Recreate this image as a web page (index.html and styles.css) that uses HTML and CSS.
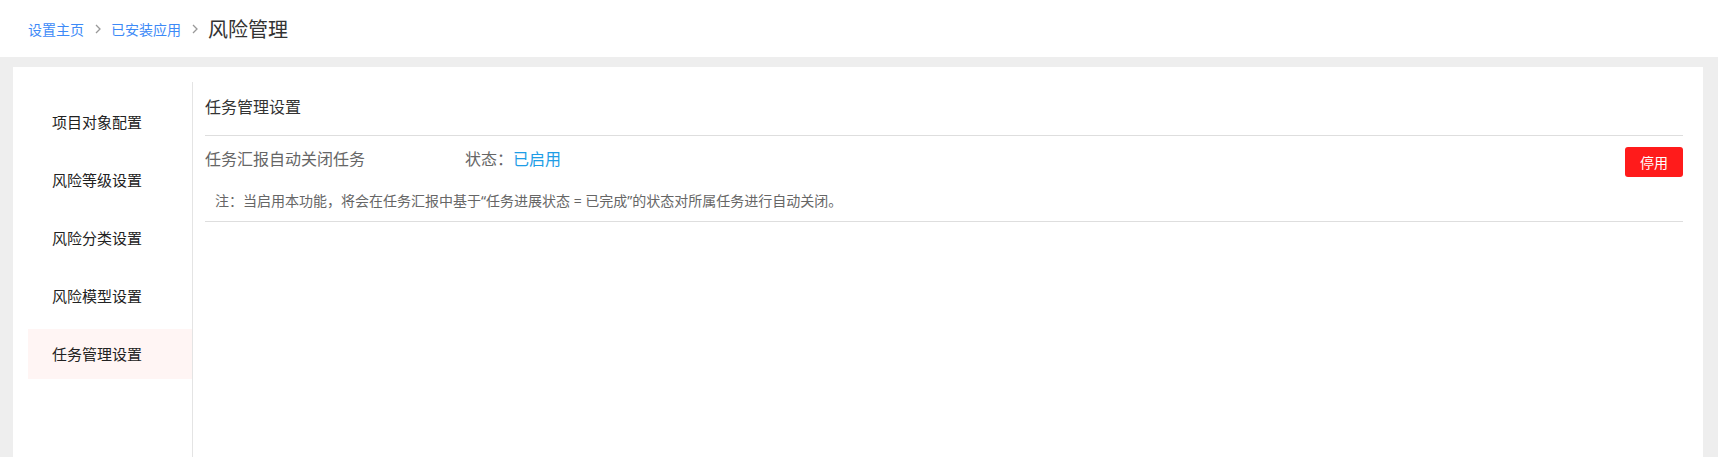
FILE: index.html
```html
<!DOCTYPE html>
<html lang="zh-CN">
<head>
  <meta charset="UTF-8">
  <title>风险管理</title>
  <link rel="stylesheet" href="styles.css">
</head>
<body>
  <div class="cabecera">
    <a class="miga" href="#">设置主页</a>
    <svg class="flecha" width="6" height="10" viewBox="0 0 6 10"><path d="M1 1l4 4-4 4" fill="none" stroke="#999" stroke-width="1.3"/></svg>
    <a class="miga" href="#">已安装应用</a>
    <svg class="flecha" width="6" height="10" viewBox="0 0 6 10"><path d="M1 1l4 4-4 4" fill="none" stroke="#999" stroke-width="1.3"/></svg>
    <span class="actual">风险管理</span>
  </div>

  <div class="tarjeta">
    <ul class="menu">
      <li>项目对象配置</li>
      <li>风险等级设置</li>
      <li>风险分类设置</li>
      <li>风险模型设置</li>
      <li class="activo">任务管理设置</li>
    </ul>

    <div class="contenido">
      <div class="titulo">任务管理设置</div>
      <div class="bloque">
        <div class="fila">
          <span class="nombre">任务汇报自动关闭任务</span>
          <span class="estado">状态：<em>已启用</em></span>
          <button class="parar">停用</button>
        </div>
        <p class="nota">注：当启用本功能，将会在任务汇报中基于“任务进展状态 = 已完成”的状态对所属任务进行自动关闭。</p>
      </div>
    </div>
  </div>
</body>
</html>
```

FILE: styles.css
```css
body {
  margin: 0;
  font-family: "Noto Sans", "Noto Sans CJK SC", sans-serif;
  background-color: #eeeeee;
  color: #333;
}
.cabecera {
  height: 57px;
  background: #fff;
  display: flex;
  align-items: center;
  padding-left: 28px;
}
.miga {
  font-size: 14px;
  color: #3d8af7;
  text-decoration: none;
}
.flecha {
  margin: 0 10px 0 11px;
}
.actual {
  font-size: 20px;
  color: #333;
}
.tarjeta {
  margin: 10px 15px 0 13px;
  background: #fff;
  display: flex;
  padding: 15px 20px 0 15px;
  min-height: 375px;
}
.menu {
  list-style: none;
  margin: 0;
  padding: 15px 0 0 0;
  width: 164px;
  border-right: 1px solid #e4e4e4;
}
.menu li {
  height: 50px;
  line-height: 50px;
  padding-left: 24px;
  margin-bottom: 8px;
  font-size: 15px;
  color: #222;
}
.menu li.activo {
  background-color: #fff5f4;
}
.contenido {
  flex: 1;
  padding-left: 12px;
}
.titulo {
  font-size: 16px;
  line-height: 24px;
  padding: 13px 0 16px;
  border-bottom: 1px solid #dedede;
  color: #333;
}
.bloque {
  border-bottom: 1px solid #dedede;
}
.fila {
  display: flex;
  align-items: flex-start;
  padding-top: 11px;
}
.nombre {
  width: 260px;
  font-size: 16px;
  line-height: 24px;
  color: #666;
}
.estado {
  flex: 1;
  font-size: 16px;
  line-height: 24px;
  color: #666;
}
.estado em {
  font-style: normal;
  color: #1e9de6;
}
.parar {
  width: 58px;
  height: 30px;
  border: none;
  border-radius: 3px;
  background-color: #ff1b1b;
  color: #fff;
  font-family: inherit;
  font-size: 14px;
  padding: 0;
  cursor: pointer;
}
.nota {
  margin: 0;
  padding: 14px 0 10px 10px;
  font-size: 14px;
  line-height: 20px;
  color: #666;
}
```
